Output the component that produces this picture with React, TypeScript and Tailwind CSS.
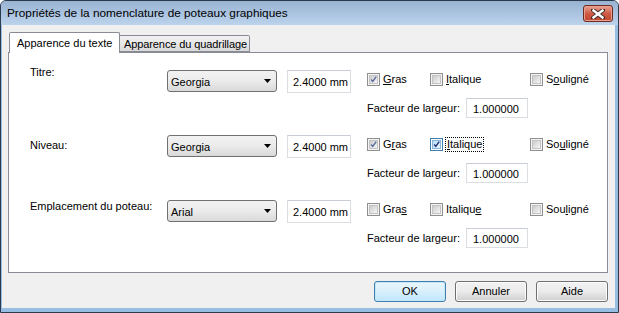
import React from "react";

const F = "font-['Liberation_Sans',Arial,sans-serif]";

function CloseGlyph() {
  return (
    <svg width="14" height="10" viewBox="0 0 14 10">
      <path d="M2 1 L12 9 M12 1 L2 9" stroke="#3a2a2a" strokeWidth="4.2" strokeLinecap="square" />
      <path d="M2.5 1.5 L11.5 8.5 M11.5 1.5 L2.5 8.5" stroke="#ffffff" strokeWidth="2.4" strokeLinecap="square" />
    </svg>
  );
}

function Check({ checked, focus }: { checked?: boolean; focus?: boolean }) {
  return (
    <div
      className={
        "w-[13px] h-[13px] border flex items-center justify-center shrink-0 " +
        (focus ? "border-[#3c7fb1] bg-[#fdfdfd]" : "border-[#8f8f8f] bg-[#f4f4f4]")
      }
    >
      <div
        className={
          "w-[9px] h-[9px] flex items-center justify-center " +
          (focus
            ? "bg-gradient-to-br from-[#b9dcf5] to-[#eaf6fd] border border-[#8ab4d8]"
            : "bg-gradient-to-br from-[#cbcbcb] to-[#f6f6f6] border border-[#c4c4c4]")
        }
      >
        {checked && (
          <svg width="9" height="9" viewBox="0 0 9 9" className="-mt-[1px]">
            <path
              d="M1.5 4.5 L3.6 7 L8 0.8"
              fill="none"
              stroke={focus ? "#1e2f7a" : "#5a6c9c"}
              strokeWidth="1.8"
            />
          </svg>
        )}
      </div>
    </div>
  );
}

function CB({
  children,
  checked,
  focus,
  w,
}: {
  children: React.ReactNode;
  checked?: boolean;
  focus?: boolean;
  w: string;
}) {
  return (
    <div className={"flex items-center " + w}>
      <Check checked={checked} focus={focus} />
      <span
        className={
          "ml-[3px] leading-[13px] whitespace-nowrap " +
          (focus ? "outline outline-1 outline-dotted outline-[#000] px-[1px]" : "")
        }
      >
        {children}
      </span>
    </div>
  );
}

function Combo({ value }: { value: string }) {
  return (
    <div className="w-[110px] h-[22px] border border-[#707070] rounded-[3px] bg-gradient-to-b from-[#f2f2f2] via-[#ebebeb] to-[#d9d9d9] flex items-center pl-[3px] pr-[5px] shrink-0">
      <span className="flex-1 pt-[2px]">{value}</span>
      <svg width="7" height="4" viewBox="0 0 7 4">
        <path d="M0 0 H7 L3.5 4 Z" fill="#000" />
      </svg>
    </div>
  );
}

function Field({ value, w, h }: { value: string; w: string; h: string }) {
  return (
    <div
      className={
        "border border-[#dadde2] border-t-[#c9ced6] bg-white flex items-center shrink-0 whitespace-nowrap " +
        w +
        " " +
        h
      }
    >
      {value}
    </div>
  );
}

function FontRow({
  label,
  labelCls,
  font,
  gras,
  ital,
  soul,
  grasChecked,
  italChecked,
  italFocus,
}: {
  label: string;
  labelCls: string;
  font: string;
  gras: React.ReactNode;
  ital: React.ReactNode;
  soul: React.ReactNode;
  grasChecked?: boolean;
  italChecked?: boolean;
  italFocus?: boolean;
}) {
  return (
    <div className="flex h-[65px]">
      <div className={"w-[137px] shrink-0 leading-[13px] whitespace-nowrap " + labelCls}>{label}</div>
      <Combo value={font} />
      <div className="ml-[10px]">
        <Field value="2.4000 mm" w="w-[64px] pl-[5px] pt-[1px]" h="h-[23px]" />
      </div>
      <div className="ml-[16px] flex flex-col">
        <div className="flex h-[19px] items-center">
          <CB w="w-[63px]" checked={grasChecked}>
            {gras}
          </CB>
          <CB w="w-[100px]" checked={italChecked} focus={italFocus}>
            {ital}
          </CB>
          <CB w="w-[80px]">{soul}</CB>
        </div>
        <div className="flex items-center mt-[9px]">
          <span className="w-[99px] leading-[13px] whitespace-nowrap">Facteur de largeur:</span>
          <Field value="1.000000" w="w-[62px] pl-[6px] pt-[3px]" h="h-[20px]" />
        </div>
      </div>
    </div>
  );
}

function Btn({ children, def }: { children: React.ReactNode; def?: boolean }) {
  return (
    <div
      className={
        "w-[72px] h-[21px] rounded-[3px] border flex items-center justify-center " +
        (def
          ? "border-[#3c7fb1] bg-gradient-to-b from-[#eaf6fd] via-[#d9f0fc] to-[#bee6fd] shadow-[inset_0_0_0_1px_#c7e6f8]"
          : "border-[#707070] bg-gradient-to-b from-[#f2f2f2] via-[#ebebeb] to-[#cfcfcf] shadow-[inset_0_0_0_1px_#fcfcfc]")
      }
    >
      {children}
    </div>
  );
}

export default function App() {
  return (
    <div
      className={
        "w-[619px] h-[313px] bg-[#98bde3] border border-[#2b3a4c] rounded-t-[6px] flex flex-col overflow-hidden text-[11px] text-black " +
        F
      }
    >
      {/* title bar */}
      <div className="h-[24px] shrink-0 bg-gradient-to-b from-[#98b3d2] to-[#bcd3ec] flex items-start pl-[6px] pr-[5px]">
        <span className="text-[11.8px] leading-[24px] text-black whitespace-nowrap">
          Propriétés de la nomenclature de poteaux graphiques
        </span>
        <div className="ml-auto mt-[4px] w-[30px] h-[17px] rounded-[3px] border border-[#6e2b22] bg-gradient-to-b from-[#e6a595] via-[#cf5a45] to-[#c14630] flex items-center justify-center shadow-[inset_0_0_0_1px_#e9a08f]">
          <CloseGlyph />
        </div>
      </div>
      {/* client */}
      <div className="flex-1 ml-[1px] mr-[3px] mb-[4px] bg-[#f0f0f0] flex flex-col pt-[7px] pl-[6px] pr-[7px] pb-[6px]">
        {/* tabs */}
        <div className="flex items-end h-[20px] pl-[1px]">
          <div className="relative z-10 w-[111px] h-[21px] -mb-[1px] bg-white border border-b-0 border-[#898c95] rounded-t-[2px] flex items-center pl-[7px] whitespace-nowrap">
            Apparence du texte
          </div>
          <div className="w-[130px] h-[17px] border border-[#898c95] border-l-0 rounded-tr-[2px] bg-gradient-to-b from-[#f2f2f2] via-[#e8e8e8] to-[#d9d9d9] flex items-center pl-[4px] pt-[1px] whitespace-nowrap overflow-hidden tracking-[-0.1px]">
            Apparence du quadrillage
          </div>
        </div>
        {/* pane */}
        <div className="h-[221px] bg-white border border-[#898c95] pl-[21px] pt-[17px] flex flex-col">
          <FontRow
            label="Titre:"
            labelCls="-mt-[4px]"
            font="Georgia"
            grasChecked
            gras={<><u>G</u>ras</>}
            ital={<><u>I</u>talique</>}
            soul={<>S<u>o</u>uligné</>}
          />
          <FontRow
            label="Niveau:"
            labelCls="mt-[4px]"
            font="Georgia"
            grasChecked
            italChecked
            italFocus
            gras={<>G<u>r</u>as</>}
            ital={<><u>I</u>talique</>}
            soul={<>So<u>u</u>ligné</>}
          />
          <FontRow
            label="Emplacement du poteau:"
            labelCls="mt-[0px]"
            font="Arial"
            gras={<>Gra<u>s</u></>}
            ital={<>Italiqu<u>e</u></>}
            soul={<>Sou<u>l</u>igné</>}
          />
        </div>
        {/* buttons */}
        <div className="mt-[8px] flex justify-end gap-[9px]">
          <Btn def>OK</Btn>
          <Btn>Annuler</Btn>
          <Btn>Aide</Btn>
        </div>
      </div>
    </div>
  );
}
